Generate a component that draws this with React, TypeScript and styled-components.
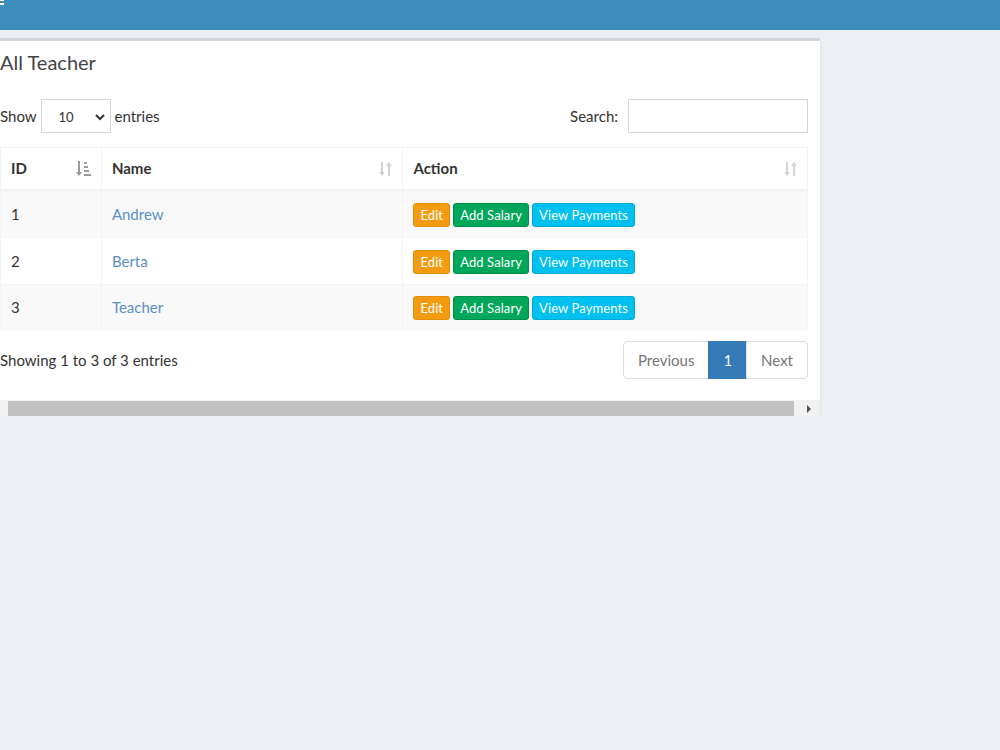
import React from 'react';
import styled, { createGlobalStyle } from 'styled-components';

const GlobalStyle = createGlobalStyle`
  html, body {
    margin: 0;
    padding: 0;
    background: #ecf0f5;
    font-family: Lato, "Source Sans Pro", "Liberation Sans", sans-serif;
    color: #333;
  }
`;

const TopBar = styled.div`
  height: 30px;
  background: #3c8dbc;
  position: relative;
`;

const Burger = styled.span`
  position: absolute;
  left: 0;
  top: -1px;
  width: 4px;
  height: 7px;
  background: linear-gradient(#fff 0 2px, transparent 2px 4px, #fff 4px 6px, transparent 6px);
`;

const Box = styled.div`
  margin-top: 8px;
  width: 820px;
  background: #fff;
  border-top: 3px solid #d2d6de;
  box-shadow: 0 1px 2px rgba(0, 0, 0, 0.12);
`;

const BoxBody = styled.div`
  padding: 0 12px 21px 0;
`;

const Title = styled.h3`
  margin: 0;
  padding: 9px 0 0;
  font-size: 20px;
  font-weight: 400;
  color: #444;
  line-height: 24px;
`;

const Controls = styled.div`
  display: flex;
  justify-content: space-between;
  align-items: center;
  margin-top: 25px;
  font-size: 15px;
  color: #333;
`;

const Label = styled.label`
  display: flex;
  align-items: center;
  gap: 4px;
`;

const SelectBox = styled.div`
  width: 70px;
  height: 34px;
  box-sizing: border-box;
  border: 1px solid #d2d6de;
  display: flex;
  align-items: center;
  justify-content: space-between;
  padding: 2px 4px 0 17px;
  font-size: 13px;
`;

const SearchInput = styled.div`
  width: 180px;
  height: 34px;
  box-sizing: border-box;
  border: 1px solid #d2d6de;
  margin-left: 6px;
`;

const Table = styled.table`
  margin-top: 14px;
  width: 808px;
  border-collapse: collapse;
  border: 1px solid #f4f4f4;
  font-size: 15px;
`;

const Th = styled.th<{ w: number }>`
  width: ${p => p.w}px;
  height: 42px;
  box-sizing: border-box;
  padding: 0 10px;
  text-align: left;
  font-weight: 700;
  color: #333;
  border: 1px solid #f4f4f4;
  border-bottom-width: 2px;
  position: relative;
`;

const SortIcon = styled.svg`
  position: absolute;
  right: 9px;
  top: 12px;
`;

const Tr = styled.tr<{ odd: boolean }>`
  background: ${p => (p.odd ? '#f9f9f9' : '#fff')};
`;

const Td = styled.td<{ h: number }>`
  height: ${p => p.h}px;
  box-sizing: border-box;
  padding: 0 10px;
  border: 1px solid #f4f4f4;
  color: #333;
`;

const NameLink = styled.a`
  color: #5a8fc7;
  text-decoration: none;
`;

const Actions = styled.div`
  display: flex;
  gap: 3px;
  align-items: center;
  padding-top: 2px;
`;

const Btn = styled.span<{ bg: string; bd: string }>`
  display: inline-block;
  height: 24px;
  line-height: 23px;
  box-sizing: border-box;
  padding: 0 6px;
  border-radius: 3px;
  background: ${p => p.bg};
  border: 1px solid ${p => p.bd};
  color: #fff;
  font-size: 13px;
  letter-spacing: 0.1px;
`;

const Footer = styled.div`
  display: flex;
  justify-content: space-between;
  align-items: center;
  margin-top: 11px;
  font-size: 15px;
`;

const Pager = styled.div`
  display: flex;
  height: 38px;
`;

const PageItem = styled.span<{ active?: boolean; first?: boolean; last?: boolean }>`
  display: flex;
  align-items: center;
  box-sizing: border-box;
  padding: 0 ${p => (p.active ? 14 : 14)}px;
  min-width: ${p => (p.active ? 38 : 0)}px;
  justify-content: center;
  border: 1px solid ${p => (p.active ? '#337ab7' : '#ddd')};
  margin-left: ${p => (p.first ? 0 : -1)}px;
  background: ${p => (p.active ? '#337ab7' : '#fff')};
  color: ${p => (p.active ? '#fff' : '#777')};
  border-radius: ${p => (p.first ? '4px 0 0 4px' : p.last ? '0 4px 4px 0' : '0')};
  font-size: 15px;
`;

const ScrollBar = styled.div`
  display: flex;
  align-items: center;
  height: 17px;
  background: #f1f1f1;
  padding-left: 8px;
`;

const Thumb = styled.div`
  width: 786px;
  height: 15px;
  background: #c1c1c1;
`;

const Arrow = styled.div`
  margin-left: 13px;
  width: 0;
  height: 0;
  border-top: 4px solid transparent;
  border-bottom: 4px solid transparent;
  border-left: 4px solid #505050;
`;

const rows = [
  { id: 1, name: 'Andrew', h: 48 },
  { id: 2, name: 'Berta', h: 47 },
  { id: 3, name: 'Teacher', h: 45 },
];

const UpDown = () => (
  <SortIcon width="14" height="18" viewBox="0 0 14 18">
    <g fill="#d3d3d3">
      <rect x="2" y="2" width="2" height="12" />
      <path d="M0 12h6l-3 4z" />
      <rect x="9" y="4" width="2" height="12" />
      <path d="M7 6h6l-3 -4z" />
    </g>
  </SortIcon>
);

const SortAsc = () => (
  <SortIcon width="16" height="18" viewBox="0 0 16 18">
    <g fill="#9a9a9a">
      <rect x="2" y="1" width="2" height="13" />
      <path d="M0 12h6l-3 4z" />
      <rect x="8" y="2" width="3" height="2" />
      <rect x="8" y="6" width="4" height="2" />
      <rect x="8" y="10" width="5" height="2" />
      <rect x="8" y="14" width="7" height="2" />
    </g>
  </SortIcon>
);

const App: React.FC = () => {
  return (
    <>
      <GlobalStyle />
      <TopBar>
        <Burger />
      </TopBar>
      <Box>
        <BoxBody>
          <Title>All Teacher</Title>
          <Controls>
            <Label>
              Show
              <SelectBox>
                10
                <svg width="12" height="10" viewBox="0 0 12 10">
                  <path d="M2 3l4 4 4-4" fill="none" stroke="#333" strokeWidth="2" />
                </svg>
              </SelectBox>
              entries
            </Label>
            <Label>
              Search:
              <SearchInput />
            </Label>
          </Controls>
          <Table>
            <thead>
              <tr>
                <Th w={101}>
                  ID
                  <SortAsc />
                </Th>
                <Th w={302}>
                  Name
                  <UpDown />
                </Th>
                <Th w={405}>
                  Action
                  <UpDown />
                </Th>
              </tr>
            </thead>
            <tbody>
              {rows.map((r, i) => (
                <Tr key={r.id} odd={i % 2 === 0}>
                  <Td h={r.h}>{r.id}</Td>
                  <Td h={r.h}>
                    <NameLink>{r.name}</NameLink>
                  </Td>
                  <Td h={r.h}>
                    <Actions>
                      <Btn bg="#f39c12" bd="#e08e0b">Edit</Btn>
                      <Btn bg="#00a65a" bd="#008d4c">Add Salary</Btn>
                      <Btn bg="#00c0ef" bd="#00acd6">View Payments</Btn>
                    </Actions>
                  </Td>
                </Tr>
              ))}
            </tbody>
          </Table>
          <Footer>
            <span>Showing 1 to 3 of 3 entries</span>
            <Pager>
              <PageItem first>Previous</PageItem>
              <PageItem active>1</PageItem>
              <PageItem last>Next</PageItem>
            </Pager>
          </Footer>
        </BoxBody>
        <ScrollBar>
          <Thumb />
          <Arrow />
        </ScrollBar>
      </Box>
    </>
  );
};

export default App;
